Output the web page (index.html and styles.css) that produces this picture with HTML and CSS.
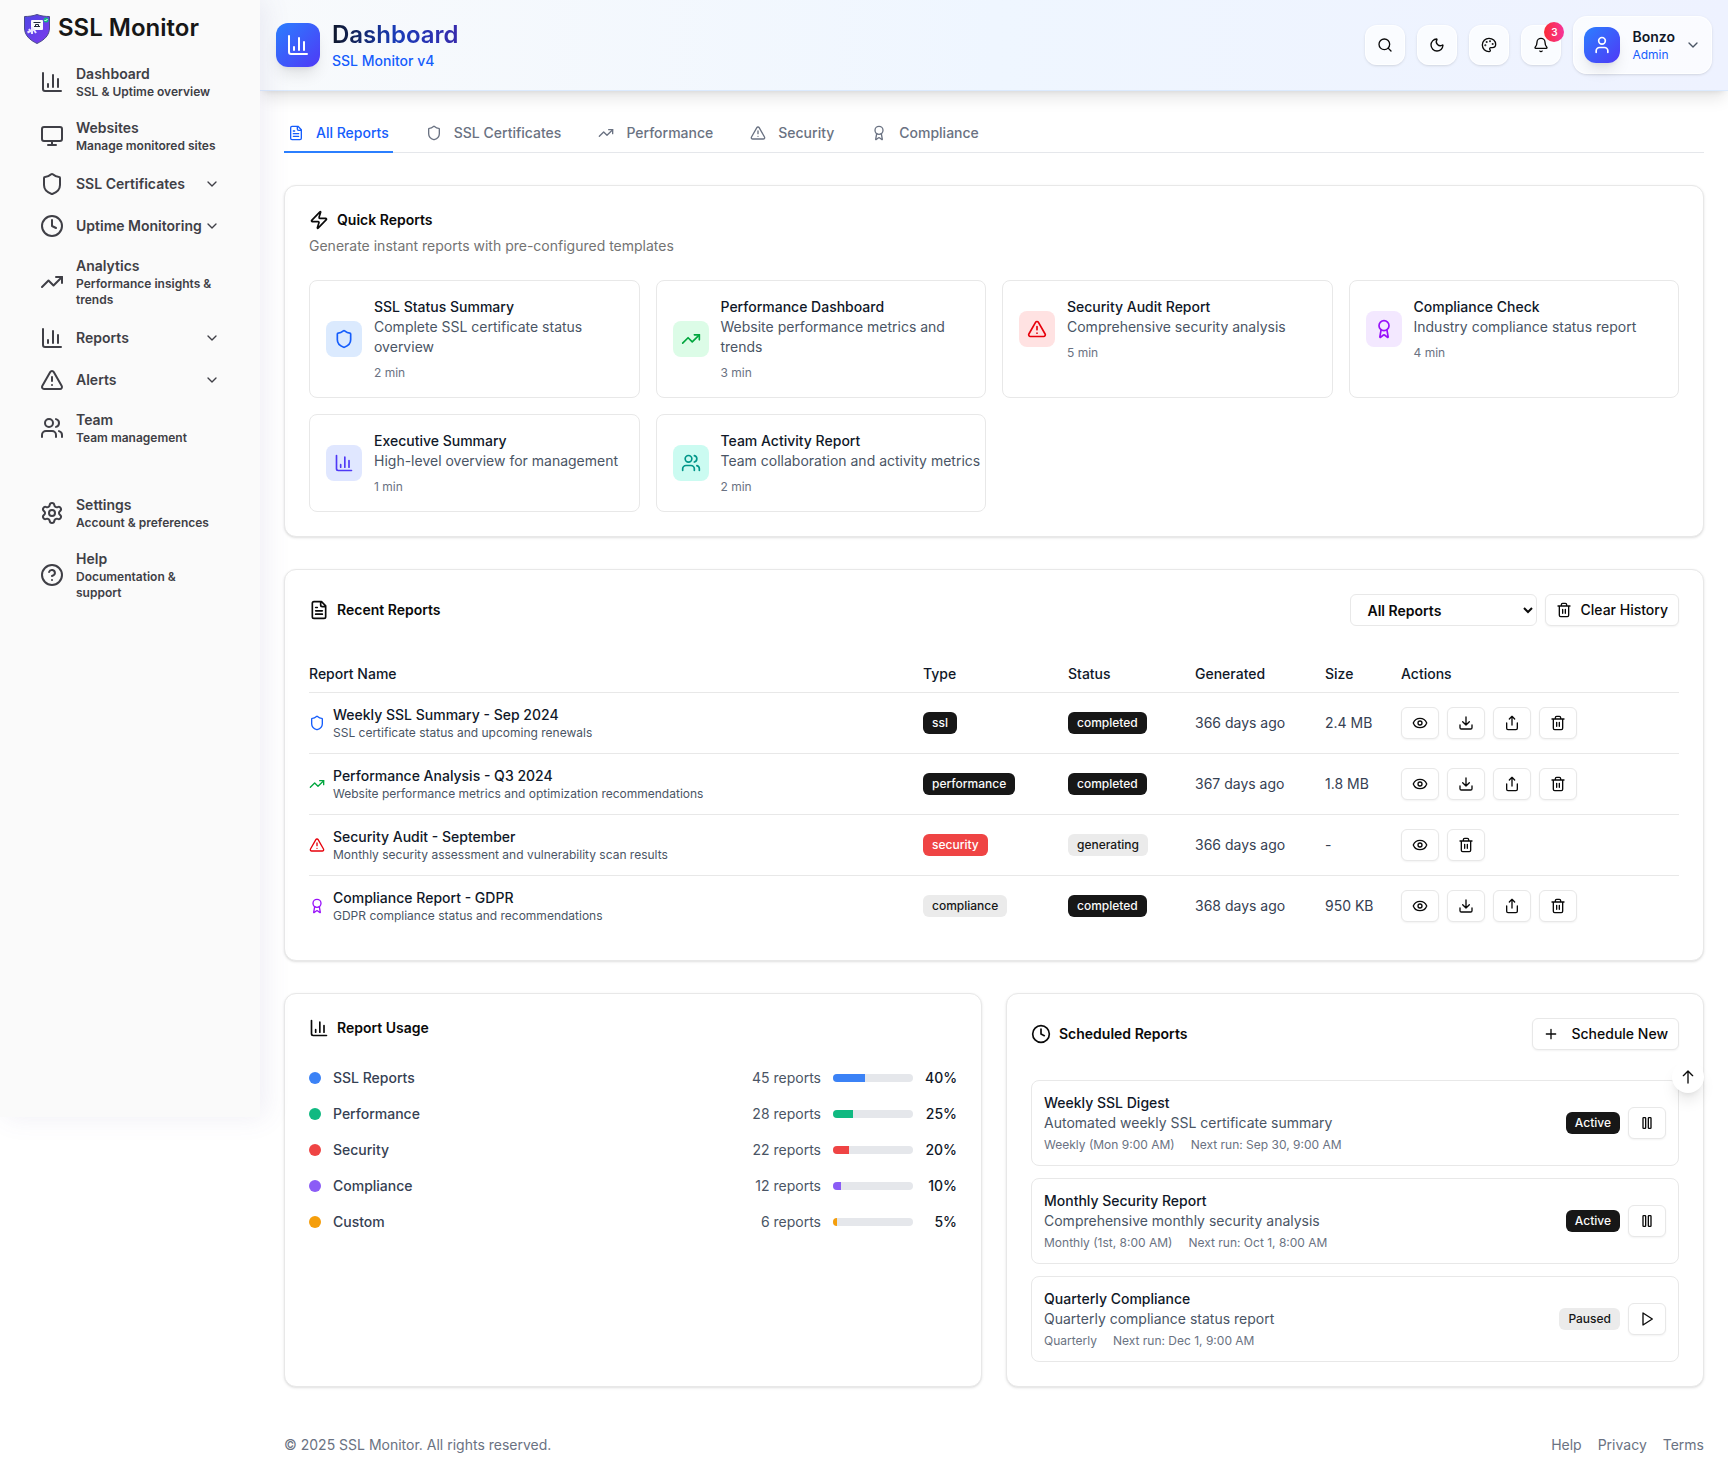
FILE: index.html
```html
<!DOCTYPE html>
<html lang="en">
<head>
<meta charset="utf-8">
<meta name="viewport" content="width=device-width, initial-scale=1">
<title>Dashboard - SSL Monitor</title>
<link rel="stylesheet" href="styles.css">
</head>
<body>
<svg class="sprite" aria-hidden="true">
  <symbol id="chart" viewBox="0 0 24 24"><path d="M3 3v16a2 2 0 0 0 2 2h16M18 17V9M13 17V5M8 17v-3"/></symbol>
  <symbol id="monitor" viewBox="0 0 24 24"><rect width="20" height="14" x="2" y="3" rx="2"/><path d="M8 21h8M12 17v4"/></symbol>
  <symbol id="shield" viewBox="0 0 24 24"><path d="M20 13c0 5-3.5 7.500-7.660 8.950a1 1 0 0 1-.67-.01C7.500 20.500 4 18 4 13V6a1 1 0 0 1 1-1c2 0 4.500-1.200 6.240-2.720a1.170 1.170 0 0 1 1.520 0C14.510 3.810 17 5 19 5a1 1 0 0 1 1 1z"/></symbol>
  <symbol id="clock" viewBox="0 0 24 24"><circle cx="12" cy="12" r="10"/><path d="M12 6v6l4 2"/></symbol>
  <symbol id="trend" viewBox="0 0 24 24"><path d="M16 7h6v6"/><path d="m22 7-8.500 8.500-5-5L2 17"/></symbol>
  <symbol id="alert" viewBox="0 0 24 24"><path d="m21.730 18-8-14a2 2 0 0 0-3.480 0l-8 14A2 2 0 0 0 4 21h16a2 2 0 0 0 1.730-3M12 9v4M12 17h.01"/></symbol>
  <symbol id="users" viewBox="0 0 24 24"><path d="M16 21v-2a4 4 0 0 0-4-4H6a4 4 0 0 0-4 4v2"/><circle cx="9" cy="7" r="4"/><path d="M22 21v-2a4 4 0 0 0-3-3.870M16 3.130a4 4 0 0 1 0 7.750"/></symbol>
  <symbol id="settings" viewBox="0 0 24 24"><path d="M9.671 4.136a2.340 2.340 0 0 1 4.659 0 2.340 2.340 0 0 0 3.319 1.915 2.340 2.340 0 0 1 2.330 4.033 2.340 2.340 0 0 0 0 3.831 2.340 2.340 0 0 1-2.330 4.033 2.340 2.340 0 0 0-3.319 1.915 2.340 2.340 0 0 1-4.659 0 2.340 2.340 0 0 0-3.320-1.915 2.340 2.340 0 0 1-2.330-4.033 2.340 2.340 0 0 0 0-3.831A2.340 2.340 0 0 1 6.350 6.051a2.340 2.340 0 0 0 3.319-1.915"/><circle cx="12" cy="12" r="3"/></symbol>
  <symbol id="help" viewBox="0 0 24 24"><circle cx="12" cy="12" r="10"/><path d="M9.090 9a3 3 0 0 1 5.830 1c0 2-3 3-3 3M12 17h.01"/></symbol>
  <symbol id="chevron" viewBox="0 0 24 24"><path d="m6 9 6 6 6-6"/></symbol>
  <symbol id="search" viewBox="0 0 24 24"><circle cx="11" cy="11" r="8"/><path d="m21 21-4.300-4.300"/></symbol>
  <symbol id="moon" viewBox="0 0 24 24"><path d="M20.985 12.486a9 9 0 1 1-9.473-9.472c.405-.022.617.460.402.803a6 6 0 0 0 8.268 8.268c.344-.215.825-.004.803.401"/></symbol>
  <symbol id="palette" viewBox="0 0 24 24"><path d="M12 22a1 1 0 0 1 0-20 10 9 0 0 1 10 9 5 5 0 0 1-5 5h-2.250a1.750 1.750 0 0 0-1.400 2.800l.3.400a1.750 1.750 0 0 1-1.400 2.800z"/><circle cx="13.500" cy="6.500" r=".5" fill="currentColor"/><circle cx="17.500" cy="10.500" r=".5" fill="currentColor"/><circle cx="6.500" cy="12.500" r=".5" fill="currentColor"/><circle cx="8.500" cy="7.500" r=".5" fill="currentColor"/></symbol>
  <symbol id="bell" viewBox="0 0 24 24"><path d="M10.268 21a2 2 0 0 0 3.464 0M3.262 15.326A1 1 0 0 0 4 17h16a1 1 0 0 0 .740-1.673C19.410 13.956 18 12.499 18 8A6 6 0 0 0 6 8c0 4.499-1.411 5.956-2.738 7.326"/></symbol>
  <symbol id="user" viewBox="0 0 24 24"><path d="M19 21v-2a4 4 0 0 0-4-4H9a4 4 0 0 0-4 4v2"/><circle cx="12" cy="7" r="4"/></symbol>
  <symbol id="file" viewBox="0 0 24 24"><path d="M15 2H6a2 2 0 0 0-2 2v16a2 2 0 0 0 2 2h12a2 2 0 0 0 2-2V7ZM14 2v4a2 2 0 0 0 2 2h4M10 9H8M16 13H8M16 17H8"/></symbol>
  <symbol id="award" viewBox="0 0 24 24"><path d="m15.477 12.890 1.515 8.526a.5.500 0 0 1-.810.470l-3.580-2.687a1 1 0 0 0-1.197 0l-3.586 2.686a.5.500 0 0 1-.810-.469l1.514-8.526"/><circle cx="12" cy="8" r="6"/></symbol>
  <symbol id="zap" viewBox="0 0 24 24"><path d="M4 14a1 1 0 0 1-.780-1.630l9.900-10.200a.5.500 0 0 1 .860.460l-1.920 6.020A1 1 0 0 0 13 10h7a1 1 0 0 1 .780 1.630l-9.900 10.200a.5.500 0 0 1-.860-.460l1.920-6.020A1 1 0 0 0 11 14z"/></symbol>
  <symbol id="trash" viewBox="0 0 24 24"><path d="M3 6h18M19 6v14a2 2 0 0 1-2 2H7a2 2 0 0 1-2-2V6M8 6V4a2 2 0 0 1 2-2h4a2 2 0 0 1 2 2v2M10 11v6M14 11v6"/></symbol>
  <symbol id="eye" viewBox="0 0 24 24"><path d="M2.062 12.348a1 1 0 0 1 0-.696 10.750 10.750 0 0 1 19.876 0 1 1 0 0 1 0 .696 10.750 10.750 0 0 1-19.876 0"/><circle cx="12" cy="12" r="3"/></symbol>
  <symbol id="download" viewBox="0 0 24 24"><path d="M21 15v4a2 2 0 0 1-2 2H5a2 2 0 0 1-2-2v-4M7 10l5 5 5-5M12 15V3"/></symbol>
  <symbol id="share" viewBox="0 0 24 24"><path d="M4 12v8a2 2 0 0 0 2 2h12a2 2 0 0 0 2-2v-8M16 6l-4-4-4 4M12 2v13"/></symbol>
  <symbol id="plus" viewBox="0 0 24 24"><path d="M5 12h14M12 5v14"/></symbol>
  <symbol id="pause" viewBox="0 0 24 24"><rect x="14" y="4" width="4" height="16" rx="1"/><rect x="6" y="4" width="4" height="16" rx="1"/></symbol>
  <symbol id="play" viewBox="0 0 24 24"><path d="m6 3 14 9-14 9z"/></symbol>
  <symbol id="arrow-up" viewBox="0 0 24 24"><path d="m5 10 7-7 7 7M12 21V3"/></symbol>
</svg>

<div class="app">
  <aside class="sidebar">
    <a class="brand" href="#">
      <svg class="brand-mark" viewBox="0 0 26 30" aria-hidden="true">
        <defs><linearGradient id="brand-fill" x1="0" y1="0" x2="1" y2="1"><stop offset="0" stop-color="#4f46e5"/><stop offset="1" stop-color="#7c3aed"/></linearGradient></defs>
        <path d="M13 .5c4 1.500 8 2 12.500 2V14c0 7-5 12-12.500 15.500C5.500 26 .5 21 .5 14V2.500c4.500 0 8.500-.5 12.500-2z" fill="url(#brand-fill)" stroke="#4a4a8a"/>
        <rect x="7" y="6" width="12" height="10" rx="1" fill="#f8fafc"/>
        <path d="M9.500 8.500h7M10 12.500h6M11.500 12.500v-2h3v2" fill="none" stroke="#1e293b"/>
        <path d="M8 13v7M3.500 18.500l7-3.500M5 15l2 3M10 16l2 3" fill="none" stroke="#e9e5ff" stroke-width="2"/>
        <circle cx="22" cy="6" r="2.500" fill="#10b981"/>
        <path d="m20.500 6 1 1 2-2" fill="none" stroke="#fff"/>
      </svg>
      <span>SSL Monitor</span>
    </a>
    <nav class="side-nav" aria-label="Main">
      <a class="side-item" href="#"><svg class="icon"><use href="#chart"/></svg><span class="side-text">Dashboard<small>SSL &amp; Uptime overview</small></span></a>
      <a class="side-item" href="#"><svg class="icon"><use href="#monitor"/></svg><span class="side-text">Websites<small>Manage monitored sites</small></span></a>
      <button class="side-item" type="button"><svg class="icon"><use href="#shield"/></svg><span class="side-text">SSL Certificates</span><svg class="icon small"><use href="#chevron"/></svg></button>
      <button class="side-item" type="button"><svg class="icon"><use href="#clock"/></svg><span class="side-text">Uptime Monitoring</span><svg class="icon small"><use href="#chevron"/></svg></button>
      <a class="side-item" href="#"><svg class="icon"><use href="#trend"/></svg><span class="side-text">Analytics<small>Performance insights &amp; trends</small></span></a>
      <button class="side-item" type="button"><svg class="icon"><use href="#chart"/></svg><span class="side-text">Reports</span><svg class="icon small"><use href="#chevron"/></svg></button>
      <button class="side-item" type="button"><svg class="icon"><use href="#alert"/></svg><span class="side-text">Alerts</span><svg class="icon small"><use href="#chevron"/></svg></button>
      <a class="side-item" href="#"><svg class="icon"><use href="#users"/></svg><span class="side-text">Team<small>Team management</small></span></a>
    </nav>
    <nav class="side-nav" aria-label="Account">
      <a class="side-item" href="#"><svg class="icon"><use href="#settings"/></svg><span class="side-text">Settings<small>Account &amp; preferences</small></span></a>
      <a class="side-item" href="#"><svg class="icon"><use href="#help"/></svg><span class="side-text">Help<small>Documentation &amp; support</small></span></a>
    </nav>
  </aside>

  <div class="page">
    <header class="topbar">
      <div class="topbar-title">
        <span class="title-icon"><svg class="icon"><use href="#chart"/></svg></span>
        <div>
          <h1>Dashboard</h1>
          <p>SSL Monitor v4</p>
        </div>
      </div>
      <div class="topbar-tools">
        <button class="tool" type="button" aria-label="Search"><svg class="icon small"><use href="#search"/></svg></button>
        <button class="tool" type="button" aria-label="Dark mode"><svg class="icon small"><use href="#moon"/></svg></button>
        <button class="tool" type="button" aria-label="Theme"><svg class="icon small"><use href="#palette"/></svg></button>
        <button class="tool" type="button" aria-label="Notifications"><svg class="icon small"><use href="#bell"/></svg><span class="count">3</span></button>
        <button class="account" type="button">
          <span class="avatar"><svg class="icon medium"><use href="#user"/></svg></span>
          <span class="account-text"><strong>Bonzo</strong><span>Admin</span></span>
          <svg class="icon small"><use href="#chevron"/></svg>
        </button>
      </div>
    </header>

    <main class="content">
      <nav class="tabs" aria-label="Report categories">
        <button class="tab active" type="button"><svg class="icon small"><use href="#file"/></svg>All Reports</button>
        <button class="tab" type="button"><svg class="icon small"><use href="#shield"/></svg>SSL Certificates</button>
        <button class="tab" type="button"><svg class="icon small"><use href="#trend"/></svg>Performance</button>
        <button class="tab" type="button"><svg class="icon small"><use href="#alert"/></svg>Security</button>
        <button class="tab" type="button"><svg class="icon small"><use href="#award"/></svg>Compliance</button>
      </nav>

      <section class="card">
        <h2><svg class="icon medium"><use href="#zap"/></svg>Quick Reports</h2>
        <p class="card-note">Generate instant reports with pre-configured templates</p>
        <div class="quick-grid">
          <button class="quick" type="button"><span class="quick-row"><span class="tile blue"><svg class="icon medium"><use href="#shield"/></svg></span><span class="quick-text"><strong>SSL Status Summary</strong><span>Complete SSL certificate status overview</span><small>2 min</small></span></span></button>
          <button class="quick" type="button"><span class="quick-row"><span class="tile green"><svg class="icon medium"><use href="#trend"/></svg></span><span class="quick-text"><strong>Performance Dashboard</strong><span>Website performance metrics and trends</span><small>3 min</small></span></span></button>
          <button class="quick" type="button"><span class="quick-row"><span class="tile red"><svg class="icon medium"><use href="#alert"/></svg></span><span class="quick-text"><strong>Security Audit Report</strong><span>Comprehensive security analysis</span><small>5 min</small></span></span></button>
          <button class="quick" type="button"><span class="quick-row"><span class="tile purple"><svg class="icon medium"><use href="#award"/></svg></span><span class="quick-text"><strong>Compliance Check</strong><span>Industry compliance status report</span><small>4 min</small></span></span></button>
          <button class="quick" type="button"><span class="quick-row"><span class="tile indigo"><svg class="icon medium"><use href="#chart"/></svg></span><span class="quick-text"><strong>Executive Summary</strong><span>High-level overview for management</span><small>1 min</small></span></span></button>
          <button class="quick" type="button"><span class="quick-row"><span class="tile teal"><svg class="icon medium"><use href="#users"/></svg></span><span class="quick-text"><strong>Team Activity Report</strong><span>Team collaboration and activity metrics</span><small>2 min</small></span></span></button>
        </div>
      </section>

      <section class="card">
        <div class="card-head">
          <h2><svg class="icon medium"><use href="#file"/></svg>Recent Reports</h2>
          <div class="card-tools">
            <select class="filter" aria-label="Filter reports"><option>All Reports</option><option>SSL Certificates</option><option>Performance</option><option>Security</option><option>Compliance</option></select>
            <button class="btn" type="button"><svg class="icon small"><use href="#trash"/></svg>Clear History</button>
          </div>
        </div>
        <table class="reports">
          <colgroup><col><col class="col-type"><col class="col-status"><col class="col-date"><col class="col-size"><col class="col-actions"></colgroup>
          <thead><tr><th>Report Name</th><th>Type</th><th>Status</th><th>Generated</th><th>Size</th><th>Actions</th></tr></thead>
          <tbody>
            <tr>
              <td><div class="report-name"><svg class="icon small ink-blue"><use href="#shield"/></svg><div><strong>Weekly SSL Summary - Sep 2024</strong><small>SSL certificate status and upcoming renewals</small></div></div></td>
              <td><span class="badge dark">ssl</span></td><td><span class="badge dark">completed</span></td><td>366 days ago</td><td>2.4 MB</td>
              <td><div class="actions"><button class="btn" type="button" aria-label="View"><svg class="icon small"><use href="#eye"/></svg></button><button class="btn" type="button" aria-label="Download"><svg class="icon small"><use href="#download"/></svg></button><button class="btn" type="button" aria-label="Share"><svg class="icon small"><use href="#share"/></svg></button><button class="btn" type="button" aria-label="Delete"><svg class="icon small"><use href="#trash"/></svg></button></div></td>
            </tr>
            <tr>
              <td><div class="report-name"><svg class="icon small ink-green"><use href="#trend"/></svg><div><strong>Performance Analysis - Q3 2024</strong><small>Website performance metrics and optimization recommendations</small></div></div></td>
              <td><span class="badge dark">performance</span></td><td><span class="badge dark">completed</span></td><td>367 days ago</td><td>1.8 MB</td>
              <td><div class="actions"><button class="btn" type="button" aria-label="View"><svg class="icon small"><use href="#eye"/></svg></button><button class="btn" type="button" aria-label="Download"><svg class="icon small"><use href="#download"/></svg></button><button class="btn" type="button" aria-label="Share"><svg class="icon small"><use href="#share"/></svg></button><button class="btn" type="button" aria-label="Delete"><svg class="icon small"><use href="#trash"/></svg></button></div></td>
            </tr>
            <tr>
              <td><div class="report-name"><svg class="icon small ink-red"><use href="#alert"/></svg><div><strong>Security Audit - September</strong><small>Monthly security assessment and vulnerability scan results</small></div></div></td>
              <td><span class="badge danger">security</span></td><td><span class="badge light">generating</span></td><td>366 days ago</td><td>-</td>
              <td><div class="actions"><button class="btn" type="button" aria-label="View"><svg class="icon small"><use href="#eye"/></svg></button><button class="btn" type="button" aria-label="Delete"><svg class="icon small"><use href="#trash"/></svg></button></div></td>
            </tr>
            <tr>
              <td><div class="report-name"><svg class="icon small ink-purple"><use href="#award"/></svg><div><strong>Compliance Report - GDPR</strong><small>GDPR compliance status and recommendations</small></div></div></td>
              <td><span class="badge light">compliance</span></td><td><span class="badge dark">completed</span></td><td>368 days ago</td><td>950 KB</td>
              <td><div class="actions"><button class="btn" type="button" aria-label="View"><svg class="icon small"><use href="#eye"/></svg></button><button class="btn" type="button" aria-label="Download"><svg class="icon small"><use href="#download"/></svg></button><button class="btn" type="button" aria-label="Share"><svg class="icon small"><use href="#share"/></svg></button><button class="btn" type="button" aria-label="Delete"><svg class="icon small"><use href="#trash"/></svg></button></div></td>
            </tr>
          </tbody>
        </table>
      </section>

      <div class="split">
        <section class="card">
          <div class="card-head"><h2><svg class="icon medium"><use href="#chart"/></svg>Report Usage</h2></div>
          <ul class="usage">
            <li><span class="dot fill-blue"></span><span class="usage-name">SSL Reports</span><span>45 reports</span><span class="bar"><span class="fill-blue" style="width:40%"></span></span><strong>40%</strong></li>
            <li><span class="dot fill-green"></span><span class="usage-name">Performance</span><span>28 reports</span><span class="bar"><span class="fill-green" style="width:25%"></span></span><strong>25%</strong></li>
            <li><span class="dot fill-red"></span><span class="usage-name">Security</span><span>22 reports</span><span class="bar"><span class="fill-red" style="width:20%"></span></span><strong>20%</strong></li>
            <li><span class="dot fill-purple"></span><span class="usage-name">Compliance</span><span>12 reports</span><span class="bar"><span class="fill-purple" style="width:10%"></span></span><strong>10%</strong></li>
            <li><span class="dot fill-amber"></span><span class="usage-name">Custom</span><span>6 reports</span><span class="bar"><span class="fill-amber" style="width:5%"></span></span><strong>5%</strong></li>
          </ul>
        </section>

        <section class="card">
          <div class="card-head">
            <h2><svg class="icon medium"><use href="#clock"/></svg>Scheduled Reports</h2>
            <button class="btn roomy" type="button"><svg class="icon small"><use href="#plus"/></svg>Schedule New</button>
          </div>
          <ul class="schedule">
            <li><div class="schedule-text"><strong>Weekly SSL Digest</strong><span>Automated weekly SSL certificate summary</span><small><span>Weekly (Mon 9:00 AM)</span><span>Next run: Sep 30, 9:00 AM</span></small></div><span class="badge dark">Active</span><button class="btn" type="button" aria-label="Pause"><svg class="icon small"><use href="#pause"/></svg></button></li>
            <li><div class="schedule-text"><strong>Monthly Security Report</strong><span>Comprehensive monthly security analysis</span><small><span>Monthly (1st, 8:00 AM)</span><span>Next run: Oct 1, 8:00 AM</span></small></div><span class="badge dark">Active</span><button class="btn" type="button" aria-label="Pause"><svg class="icon small"><use href="#pause"/></svg></button></li>
            <li><div class="schedule-text"><strong>Quarterly Compliance</strong><span>Quarterly compliance status report</span><small><span>Quarterly</span><span>Next run: Dec 1, 9:00 AM</span></small></div><span class="badge light">Paused</span><button class="btn" type="button" aria-label="Resume"><svg class="icon small"><use href="#play"/></svg></button></li>
          </ul>
          <button class="to-top" type="button" aria-label="Back to top"><svg class="icon small"><use href="#arrow-up"/></svg></button>
        </section>
      </div>
    </main>

    <footer class="footer">
      <span>© 2025 SSL Monitor. All rights reserved.</span>
      <nav aria-label="Footer"><a href="#">Help</a><a href="#">Privacy</a><a href="#">Terms</a></nav>
    </footer>
  </div>
</div>
</body>
</html>
```
FILE: styles.css
```css
* { box-sizing: border-box; }

body {
  margin: 0;
  background: #fff;
  color: #0a0a0a;
  font: 14px/20px Inter, "Liberation Sans", sans-serif;
}

h1, h2, p, ul { margin: 0; padding: 0; }
ul { list-style: none; }
a { color: inherit; text-decoration: none; }
button, select { font: inherit; color: inherit; cursor: pointer; }
small { font-size: 12px; line-height: 16px; }
strong { font-weight: 500; }

.sprite { display: none; }

.icon {
  flex: none;
  display: block;
  width: 24px;
  height: 24px;
  fill: none;
  stroke: currentColor;
  stroke-width: 2;
  stroke-linecap: round;
  stroke-linejoin: round;
}
.icon.medium { width: 20px; height: 20px; }
.icon.small { width: 16px; height: 16px; }

.app {
  display: grid;
  grid-template-columns: 260px minmax(0, 1fr);
  align-items: start;
}

/* Sidebar */
.sidebar {
  position: relative;
  z-index: 2;
  min-height: 1117px;
  padding: 14px 24px 24px;
  background: #fafafa;
  box-shadow: 5px 0 25px rgba(94, 92, 154, 0.1);
}
.brand {
  display: flex;
  align-items: center;
  gap: 8px;
  height: 30px;
  margin-bottom: 12px;
  font-size: 24px;
  line-height: 24px;
  font-weight: 600;
  color: #171717;
}
.brand span { padding-bottom: 2px; }
.brand-mark { width: 26px; height: 30px; }

.side-nav { display: grid; gap: 2px; }
.side-nav + .side-nav { margin-top: 33px; }
.side-item {
  display: flex;
  align-items: center;
  gap: 12px;
  width: 100%;
  padding: 8px 16px;
  border: 0;
  background: none;
  color: #3f3f46;
  font-weight: 600;
  text-align: left;
}
.side-text { flex: 1; }
.side-text small { display: block; }
.side-item .small { margin-left: -12px; }
button.side-item .side-text { white-space: nowrap; }

/* Top bar */
.topbar {
  position: relative;
  z-index: 1;
  display: flex;
  align-items: center;
  justify-content: space-between;
  padding: 16px;
  border-bottom: 1px solid #dbeafe;
  background: linear-gradient(90deg, #f8fafc, #eff6ff 50%, #eef2ff);
  box-shadow: 0 10px 15px -3px rgba(0, 0, 0, 0.1), 0 4px 6px -4px rgba(0, 0, 0, 0.1);
}
.topbar-title, .topbar-tools { display: flex; align-items: center; gap: 12px; }
.title-icon, .avatar {
  display: grid;
  place-items: center;
  border-radius: 12px;
  background: linear-gradient(135deg, #2b7fff, #4f39f6);
  box-shadow: 0 10px 15px -3px rgba(0, 0, 0, 0.1), 0 4px 6px -4px rgba(0, 0, 0, 0.1);
  color: #fff;
}
.title-icon { width: 44px; height: 44px; }
.avatar { width: 36px; height: 36px; }
.topbar h1 {
  width: max-content;
  font-size: 24px;
  line-height: 32px;
  font-weight: 600;
  background: linear-gradient(90deg, #0f172b, #193cb8 50%, #372aac);
  background-clip: text;
  color: transparent;
}
.topbar p { color: #155dfc; font-weight: 500; }

.tool, .account {
  position: relative;
  border: 1px solid rgba(255, 255, 255, 0.8);
  background: rgba(255, 255, 255, 0.7);
  box-shadow: 0 1px 3px rgba(0, 0, 0, 0.1), 0 1px 2px -1px rgba(0, 0, 0, 0.1);
}
.tool {
  display: grid;
  place-items: center;
  width: 40px;
  height: 40px;
  padding: 0;
  border-radius: 12px;
}
.count {
  position: absolute;
  top: -4px;
  right: -4px;
  width: 20px;
  height: 20px;
  border-radius: 50%;
  background: linear-gradient(90deg, #fb2c36, #f6339a);
  color: #fff;
  font-size: 10px;
  font-weight: 600;
}
.account {
  display: flex;
  align-items: center;
  gap: 12px;
  padding: 10px;
  border-radius: 14px;
  color: #101828;
  text-align: left;
}
.account .small { margin-left: -2px; color: #4a5565; }
.account-text { display: grid; }
.account-text strong { font-weight: 600; }
.account-text span { font-size: 12px; line-height: 16px; color: #155dfc; }

/* Content */
.content {
  display: grid;
  gap: 32px;
  padding: 24px 24px 0;
}
.tabs {
  display: flex;
  gap: 29px;
  border-bottom: 1px solid #e5e7eb;
}
.tab {
  display: flex;
  align-items: center;
  gap: 12px;
  margin-bottom: -1px;
  padding: 8px 4px;
  border: 0;
  border-bottom: 2px solid transparent;
  background: none;
  color: #6a7282;
  font-weight: 500;
}
.tab.active { border-color: #2b7fff; color: #155dfc; }

.card {
  position: relative;
  padding: 24px;
  border: 1px solid #e8e8e8;
  border-radius: 12px;
  background: #fff;
  box-shadow: 0 1px 3px rgba(0, 0, 0, 0.1), 0 1px 2px -1px rgba(0, 0, 0, 0.1);
}
.card h2 {
  display: flex;
  align-items: center;
  gap: 8px;
  font-size: 14px;
  font-weight: 600;
}
.card-note { margin-top: 6px; color: #737373; }
.card-head {
  display: flex;
  align-items: center;
  justify-content: space-between;
  margin-bottom: 30px;
}
.card-tools { display: flex; gap: 8px; }

.quick-grid {
  display: grid;
  grid-template-columns: repeat(4, minmax(0, 1fr));
  gap: 16px;
  margin-top: 24px;
}
.quick {
  display: flex;
  align-items: flex-start;
  padding: 16px 0 16px 16px;
  border: 1px solid #e8e8e8;
  border-radius: 8px;
  background: #fff;
  text-align: left;
}
.quick-row { display: flex; align-items: center; gap: 12px; }
.tile {
  flex: none;
  display: grid;
  place-items: center;
  width: 36px;
  height: 36px;
  border-radius: 8px;
}
.tile.blue { background: #dbeafe; color: #155dfc; }
.tile.green { background: #dcfce7; color: #00a63e; }
.tile.red { background: #ffe2e2; color: #e7000b; }
.tile.purple { background: #f3e8ff; color: #9810fa; }
.tile.indigo { background: #e0e7ff; color: #4f39f6; }
.tile.teal { background: #cbfbf1; color: #009689; }
.quick-text { display: grid; }
.quick-text strong, .schedule-text strong { color: #101828; }
.quick-text span { color: #4a5565; }
.quick-text small { margin-top: 8px; color: #6a7282; }

.btn {
  display: flex;
  align-items: center;
  justify-content: center;
  gap: 8px;
  height: 32px;
  padding: 0 10px;
  border: 1px solid #e8e8e8;
  border-radius: 6px;
  background: #fff;
  box-shadow: 0 1px 2px rgba(0, 0, 0, 0.05);
  color: #0a0a0a;
  font-weight: 500;
}
.btn.roomy { gap: 12px; }
.filter {
  width: 187px;
  height: 32px;
  padding: 0 0 0 12px;
  border: 1px solid #e8e8e8;
  border-radius: 6px;
  background: #fff;
  font-weight: 600;
}

.reports {
  width: 100%;
  table-layout: fixed;
  border-spacing: 0;
}
.col-type { width: 145px; }
.col-status { width: 127px; }
.col-date { width: 130px; }
.col-size { width: 76px; }
.col-actions { width: 278px; }
.reports th {
  padding: 8px 0;
  border-bottom: 1px solid #e8e8e8;
  color: #101828;
  font-weight: 500;
  text-align: left;
}
.reports td {
  padding: 12px 0;
  height: 61px;
  border-bottom: 1px solid #e8e8e8;
  color: #364153;
}
.reports tr:last-child td { height: 60px; border-bottom: 0; }
.report-name { display: flex; align-items: center; gap: 8px; }
.report-name strong { display: block; color: #101828; }
.report-name small { display: block; color: #4a5565; }
.actions { display: flex; gap: 8px; }
.ink-blue { color: #155dfc; }
.ink-green { color: #00a63e; }
.ink-red { color: #e7000b; }
.ink-purple { color: #9810fa; }

.badge {
  display: inline-block;
  padding: 3px 9px;
  border-radius: 6px;
  font-size: 12px;
  line-height: 16px;
  font-weight: 500;
  vertical-align: middle;
}
.badge.dark { background: #171717; color: #fafafa; }
.badge.light { background: #ebebeb; color: #171717; }
.badge.danger { background: #ef4444; color: #fff; }

.split {
  display: grid;
  grid-template-columns: repeat(2, minmax(0, 1fr));
  gap: 24px;
}

.usage { display: grid; gap: 16px; }
.usage li {
  display: flex;
  align-items: center;
  gap: 12px;
  color: #4a5565;
}
.usage-name { flex: 1; color: #364153; font-weight: 500; }
.usage strong { width: 32px; color: #101828; text-align: right; }
.dot { width: 12px; height: 12px; border-radius: 50%; }
.bar {
  width: 80px;
  height: 8px;
  border-radius: 4px;
  background: #e5e7eb;
  overflow: hidden;
}
.bar span { display: block; height: 100%; }
.fill-blue { background: #3b82f6; }
.fill-green { background: #10b981; }
.fill-red { background: #ef4444; }
.fill-purple { background: #8b5cf6; }
.fill-amber { background: #f59e0b; }

.schedule { display: grid; gap: 12px; }
.schedule li {
  display: flex;
  align-items: center;
  gap: 8px;
  padding: 12px;
  border: 1px solid #e8e8e8;
  border-radius: 8px;
}
.schedule-text { flex: 1; display: grid; }
.schedule-text > span { color: #4a5565; }
.schedule-text small { display: flex; gap: 16px; margin-top: 4px; color: #6a7282; }

.to-top {
  position: absolute;
  top: 67px;
  right: -1px;
  display: grid;
  place-items: center;
  width: 32px;
  height: 32px;
  padding: 0;
  border: 0;
  border-radius: 50%;
  background: #fff;
  box-shadow: 0 10px 15px -3px rgba(0, 0, 0, 0.1), 0 4px 6px -4px rgba(0, 0, 0, 0.1);
}

.footer {
  display: flex;
  justify-content: space-between;
  padding: 48px 24px 24px;
  color: #6a7282;
}
.footer nav { display: flex; gap: 16px; }
```
